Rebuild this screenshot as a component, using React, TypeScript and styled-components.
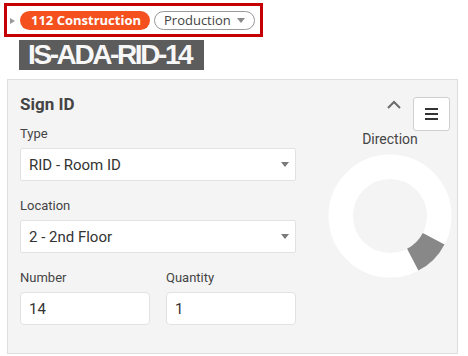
import styled, { createGlobalStyle } from "styled-components"

const GlobalStyle = createGlobalStyle`
  body {
    margin: 0;
    background: #ffffff;
    font-family: Roboto, "Liberation Sans", sans-serif;
  }
`

interface FieldProps {
  label: string
  value: string
  select?: boolean
}

const Field: React.FC<FieldProps> = ({ label, value, select }) => (
  <FieldWrap>
    <Label>{label}</Label>
    <InputBox $rounded={!select}>
      <span>{value}</span>
      {select && <Caret />}
    </InputBox>
  </FieldWrap>
)

// Direction wheel: white ring with the chosen sector in grey
const DirectionWheel = () => (
  <svg width="124" height="124" viewBox="0 0 124 124">
    <circle cx="62" cy="62" r="49.25" fill="none" stroke="#ffffff" strokeWidth="24.5" />
    <path
      d="M116.55 90.39 A61.5 61.5 0 0 1 90.39 116.55 L79.08 94.82 A37 37 0 0 0 94.82 79.08 Z"
      fill="#888888"
    />
  </svg>
)

const App = () => {
  return (
    <>
      <GlobalStyle />
      <Header>
        <Expander />
        <StatusPill>112 Construction</StatusPill>
        <StagePill>
          Production
          <StageCaret />
        </StagePill>
      </Header>
      <Title>IS-ADA-RID-14</Title>

      <Panel>
        <FormColumn>
          <Heading>Sign ID</Heading>
          <Fields>
            <Field label="Type" value="RID - Room ID" select />
            <Field label="Location" value="2 - 2nd Floor" select />
            <Pair>
              <Field label="Number" value="14" />
              <Field label="Quantity" value="1" />
            </Pair>
          </Fields>
        </FormColumn>

        <SideColumn>
          <Toolbar>
            <svg width="14" height="9" viewBox="0 0 14 9">
              <polyline points="1,8 7,2 13,8" fill="none" stroke="#6b6b6b" strokeWidth="2" />
            </svg>
            <MenuButton>
              <svg width="13" height="12" viewBox="0 0 13 12">
                <rect x="0" y="0" width="13" height="2" fill="#333" />
                <rect x="0" y="5" width="13" height="2" fill="#333" />
                <rect x="0" y="10" width="13" height="2" fill="#333" />
              </svg>
            </MenuButton>
          </Toolbar>
          <SideLabel>Direction</SideLabel>
          <WheelWrap>
            <DirectionWheel />
          </WheelWrap>
        </SideColumn>
      </Panel>
    </>
  )
}

export default App

//HEADER
const Header = styled.div`
  display: flex;
  width: fit-content;
  align-items: center;
  height: 28px;
  margin: 3px 0 0 4px;
  padding: 0 5px 0 3px;
  border: 3px solid #c40000;
`
const Expander = styled.span`
  width: 0;
  height: 0;
  border-top: 3px solid transparent;
  border-bottom: 3px solid transparent;
  border-left: 5px solid #9a9a9a;
  margin-right: 5px;
  margin-top: 1px;
`
const StatusPill = styled.span`
  height: 19px;
  line-height: 19px;
  padding: 0 9px 0 11px;
  border-radius: 10px;
  background: #f4511e;
  color: #ffffff;
  font-family: "Open Sans", sans-serif;
  font-weight: bold;
  font-size: 13px;
  white-space: nowrap;
`
const StagePill = styled.span`
  display: inline-flex;
  align-items: center;
  box-sizing: border-box;
  height: 19px;
  margin-left: 4px;
  padding: 0 9px 0 9px;
  border: 1px solid #999999;
  border-radius: 10px;
  background: #ffffff;
  color: #444444;
  font-family: "Open Sans", sans-serif;
  font-size: 13px;
  white-space: nowrap;
`
const StageCaret = styled.span`
  margin: 1px 0 0 6px;
  width: 0;
  height: 0;
  border-left: 4px solid transparent;
  border-right: 4px solid transparent;
  border-top: 5px solid #8a8a8a;
`
const Title = styled.div`
  width: fit-content;
  height: 30px;
  line-height: 30px;
  margin: 3px 0 0 19px;
  padding: 0 13px 0 9px;
  background: #5c5c5c;
  color: #f7f7f7;
  font-family: "Liberation Sans", Arial, sans-serif;
  font-weight: bold;
  font-size: 28px;
  letter-spacing: -2.4px;
`

//PANEL
const Panel = styled.div`
  display: flex;
  width: 451px;
  box-sizing: border-box;
  margin: 9px 0 0 7px;
  padding: 14px 0 28px 12px;
  background: #f4f4f4;
  border: 1px solid #dedede;
`
const FormColumn = styled.div`
  width: 276px;
  display: flex;
  flex-direction: column;
`
const Heading = styled.div`
  font-size: 17px;
  line-height: 20px;
  font-weight: bold;
  color: #444444;
  margin-bottom: 12px;
`
const Fields = styled.div`
  display: flex;
  flex-direction: column;
  gap: 17px;
`
const FieldWrap = styled.div`
  display: flex;
  flex-direction: column;
`
const Label = styled.div`
  font-size: 13px;
  line-height: 16px;
  color: #444444;
  margin-bottom: 6px;
`
const InputBox = styled.div<{ $rounded: boolean }>`
  position: relative;
  box-sizing: border-box;
  height: 33px;
  display: flex;
  align-items: center;
  padding: 0 10px 0 8px;
  background: #ffffff;
  border: 1px solid #e2e2e2;
  border-radius: ${(p) => (p.$rounded ? "4px" : "2px")};
  font-size: 15px;
  color: #333333;
`
const Caret = styled.span`
  position: absolute;
  right: 6px;
  top: 13px;
  width: 0;
  height: 0;
  border-left: 4px solid transparent;
  border-right: 4px solid transparent;
  border-top: 5px solid #7a7a7a;
`
const Pair = styled.div`
  display: grid;
  grid-template-columns: 130px 130px;
  column-gap: 16px;
`

//SIDE
const SideColumn = styled.div`
  width: 124px;
  margin-left: auto;
  margin-right: 5px;
  display: flex;
  flex-direction: column;
  align-items: center;
`
const Toolbar = styled.div`
  align-self: stretch;
  display: flex;
  justify-content: flex-end;
  align-items: flex-start;
  gap: 12px;
  padding: 3px 2px 0 0;
  svg {
    display: block;
  }
  & > svg {
    margin-top: 3px;
  }
`
const MenuButton = styled.div`
  width: 37px;
  height: 34px;
  box-sizing: border-box;
  display: flex;
  align-items: center;
  justify-content: center;
  background: #ffffff;
  border: 1px solid #cfcfcf;
  border-radius: 3px;
`
const SideLabel = styled.div`
  font-size: 14px;
  line-height: 16px;
  color: #444444;
`
const WheelWrap = styled.div`
  margin-top: 7px;
  svg {
    display: block;
  }
`
